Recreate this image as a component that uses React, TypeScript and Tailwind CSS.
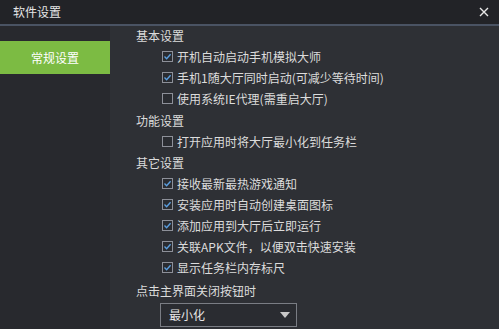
import React from "react";

const font = { fontFamily: '"Noto Sans CJK SC", "Microsoft YaHei", "Noto Sans", sans-serif' };

function Check({ checked }: { checked: boolean }) {
  return (
    <span className="w-[11px] h-[11px] border border-[#8d9099] bg-[#2a2c31] flex items-center justify-center shrink-0">
      {checked && (
        <svg width="9" height="9" viewBox="0 0 9 9">
          <path d="M1.5 4.6 L3.6 6.7 L7.6 2.2" fill="none" stroke="#5b9fe0" strokeWidth="1.4" />
        </svg>
      )}
    </span>
  );
}

function Item({ label, checked }: { label: string; checked: boolean }) {
  return (
    <div className="h-[21px] flex items-center pl-[26px] gap-[4px]">
      <Check checked={checked} />
      <span>{label}</span>
    </div>
  );
}

function Header({ label, className = "" }: { label: string; className?: string }) {
  return <div className={"h-[21px] flex items-center " + className}>{label}</div>;
}

export default function App() {
  return (
    <div className="w-[499px] h-[329px] bg-[#2e3035] text-[#dcdcdc] text-[12px] flex flex-col overflow-hidden" style={font}>
      <div className="h-[24px] bg-[#222327] flex items-center justify-between pl-[13px] pr-[10px] shrink-0">
        <span className="text-[12px] text-[#e6e6e6]">软件设置</span>
        <svg width="10" height="10" viewBox="0 0 10 10">
          <path d="M1 1 L9 9 M9 1 L1 9" stroke="#e8e8e8" strokeWidth="1.4" />
        </svg>
      </div>
      <div className="h-[2px] bg-[#4a5363] shrink-0" />
      <div className="flex flex-1">
        <div className="w-[110px] bg-[#28292e] pt-[15px] shrink-0">
          <div className="h-[33px] bg-[#7cbb43] flex items-center justify-center text-white text-[12px]">常规设置</div>
        </div>
        <div className="flex-1 pl-[26px] -mt-[1px]">
          <Header label="基本设置" />
          <Item label="开机自动启动手机模拟大师" checked />
          <Item label="手机1随大厅同时启动(可减少等待时间)" checked />
          <Item label="使用系统IE代理(需重启大厅)" checked={false} />
          <Header label="功能设置" className="mt-[1px]" />
          <Item label="打开应用时将大厅最小化到任务栏" checked={false} />
          <Header label="其它设置" />
          <Item label="接收最新最热游戏通知" checked />
          <Item label="安装应用时自动创建桌面图标" checked />
          <Item label="添加应用到大厅后立即运行" checked />
          <Item label="关联APK文件，以便双击快速安装" checked />
          <Item label="显示任务栏内存标尺" checked />
          <Header label="点击主界面关闭按钮时" className="mt-[2px]" />
          <div className="ml-[24px] mt-[2px] w-[137px] h-[24px] border border-[#7a7d84] bg-[#2a2c31] flex items-center justify-between pl-[8px] pr-[6px]">
            <span className="text-[#e6e6e6]">最小化</span>
            <svg width="10" height="6" viewBox="0 0 10 6">
              <path d="M0 0 L10 0 L5 6 Z" fill="#c8c8c8" />
            </svg>
          </div>
        </div>
      </div>
    </div>
  );
}
